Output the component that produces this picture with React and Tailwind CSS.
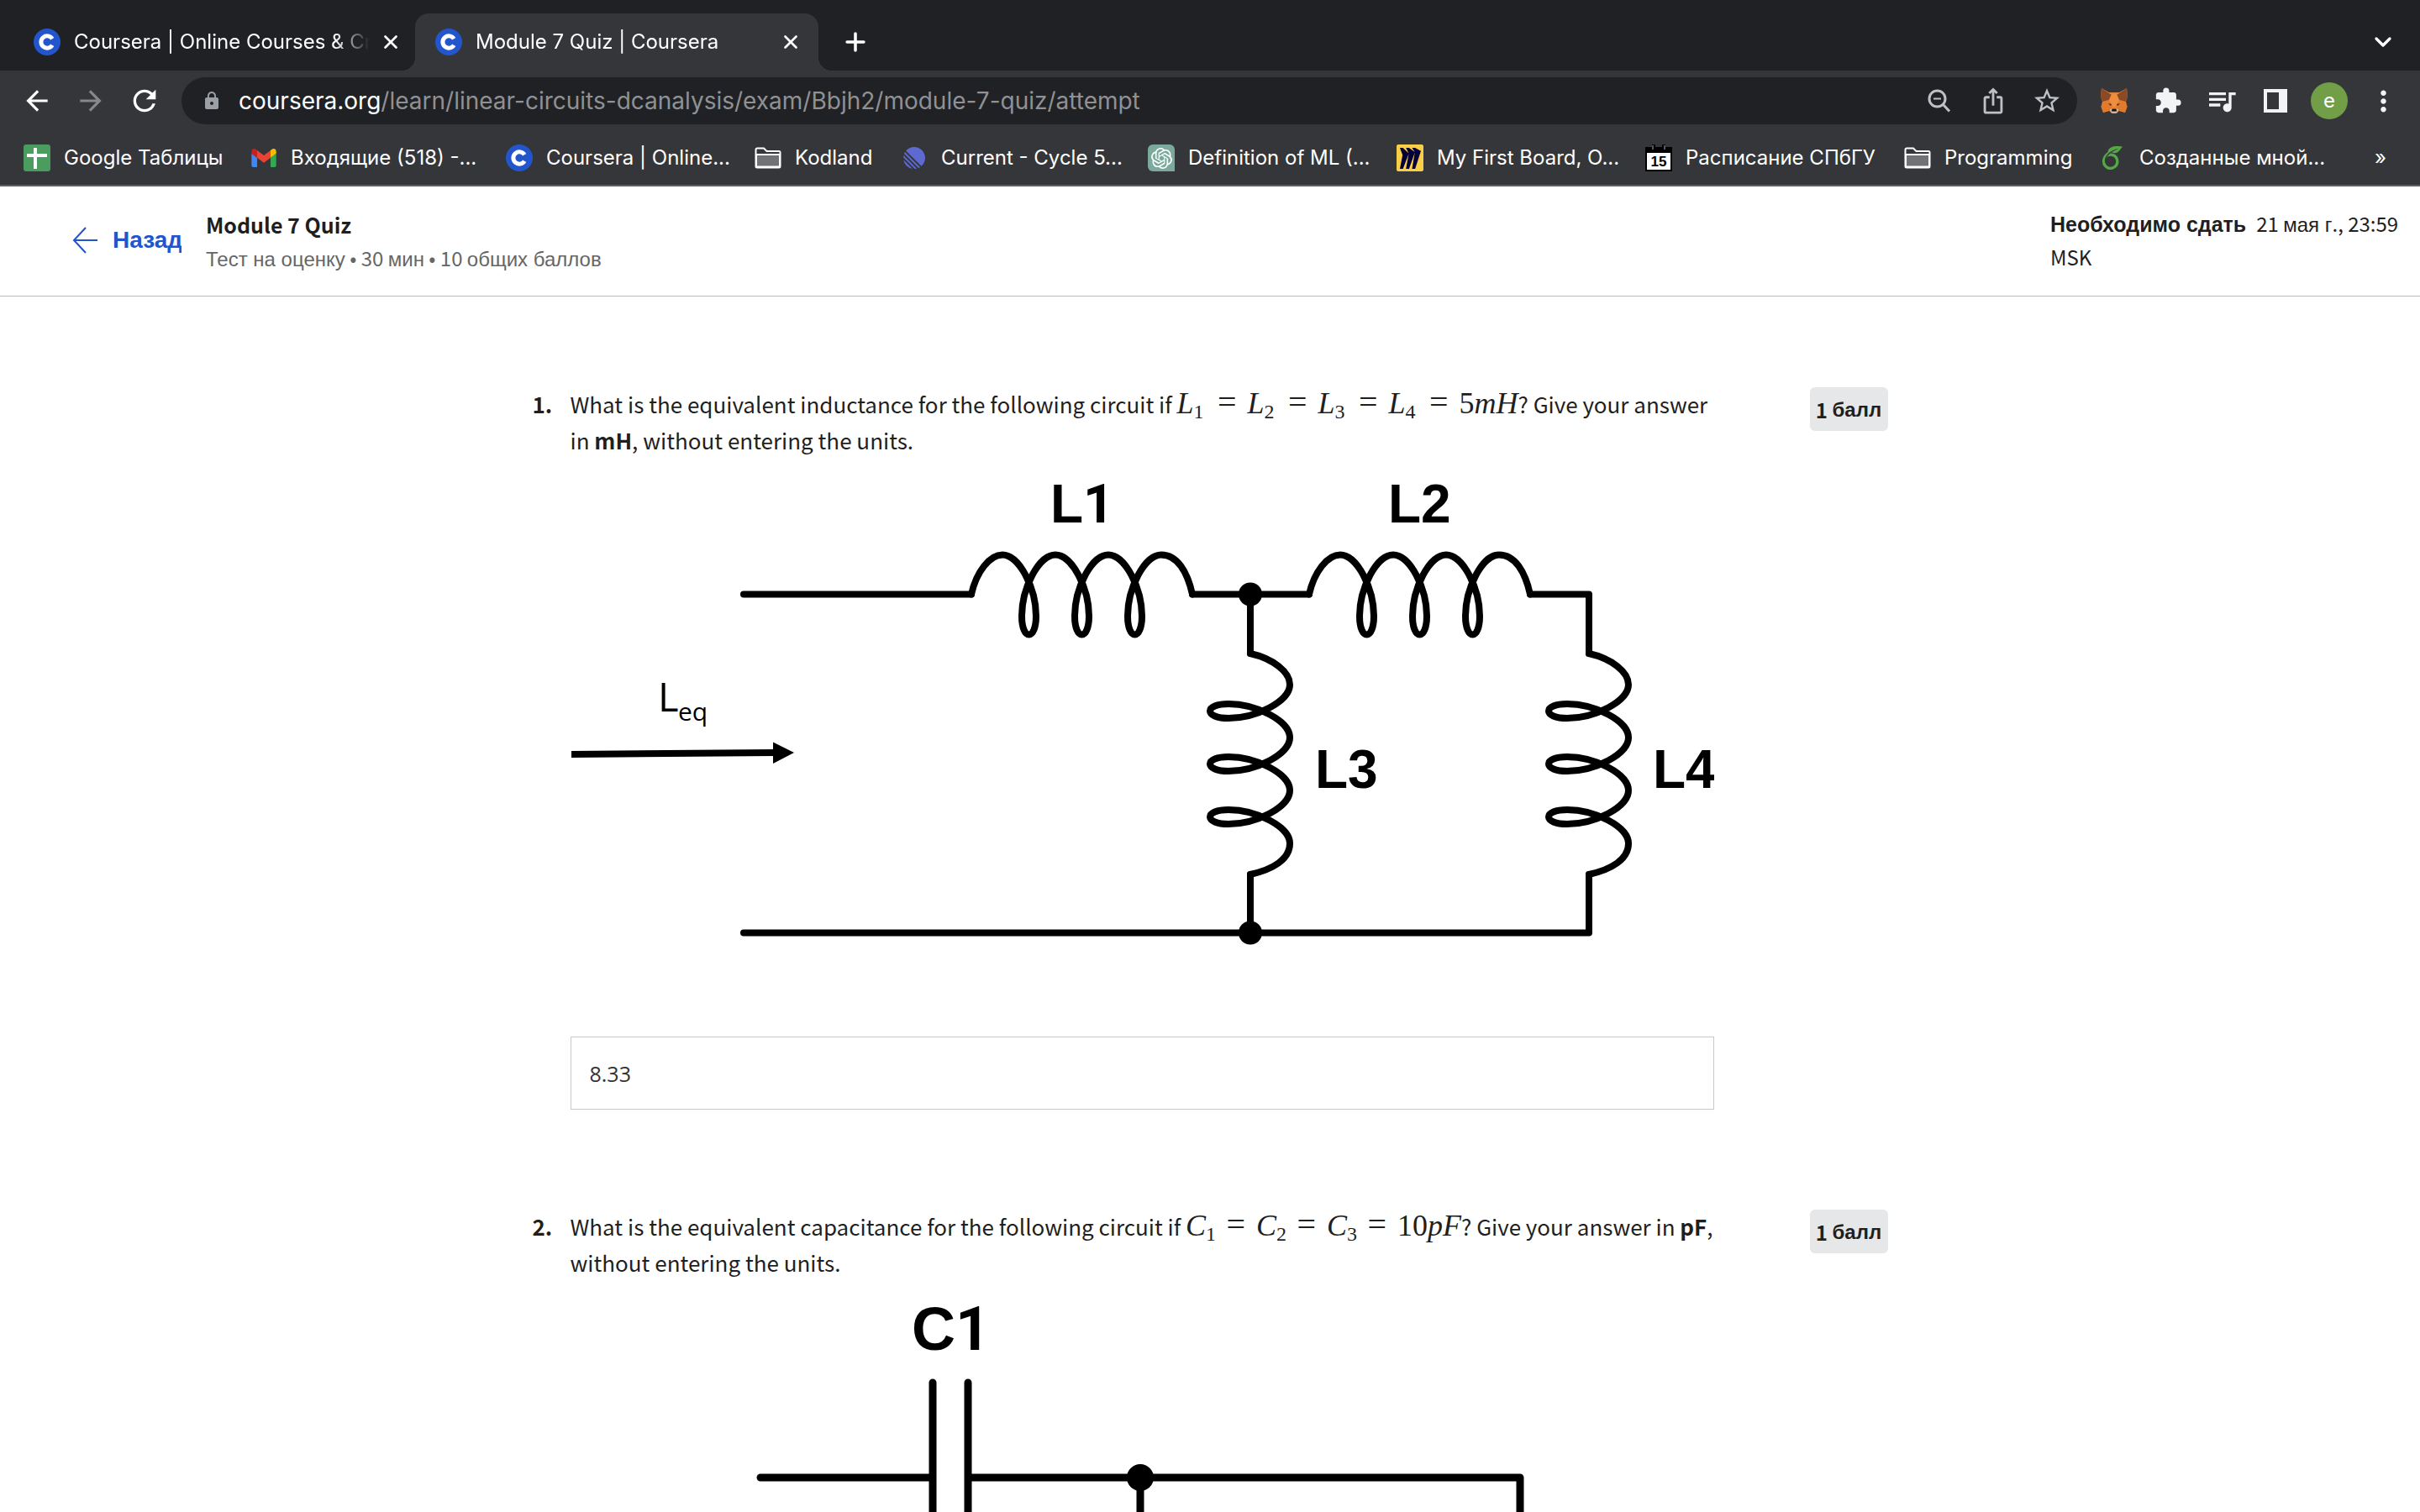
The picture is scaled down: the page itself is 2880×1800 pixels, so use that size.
import React from "react";
import {
  MdArrowBack, MdArrowForward, MdRefresh, MdLock, MdIosShare,
  MdStarOutline, MdExtension, MdQueueMusic, MdMoreVert,
} from "react-icons/md";
import { SiOpenai, SiMiro, SiLinear, SiOverleaf } from "react-icons/si";
import { X, Plus, ChevronDown } from "lucide-react";

const INTER = "font-['Inter','Liberation_Sans',sans-serif]";
const LATIN = "font-['Noto_Sans_CJK_JP','Noto_Sans',sans-serif]";
const CYR = "font-['Liberation_Sans',sans-serif]";

function CourseraIcon() {
  return (
    <svg viewBox="0 0 32 32" className="size-8 shrink-0" aria-hidden="true">
      <circle cx="16" cy="16" r="16" fill="#2356cc" />
      <path d="M22.2 12.2A7.2 7.2 0 1 0 22.2 19.8" fill="none" stroke="#fff" strokeWidth="5" />
    </svg>
  );
}

function SheetsIcon() {
  return (
    <svg viewBox="0 0 32 32" className="size-8 shrink-0" aria-hidden="true">
      <rect width="32" height="32" rx="3" fill="#4a9c5f" />
      <path d="M14 4V29M4 13H28" stroke="#fff" strokeWidth="4" />
    </svg>
  );
}

function GmailIcon() {
  return (
    <svg viewBox="48 31 96 88" className="size-8 shrink-0" aria-hidden="true">
      <path fill="#4285f4" d="M58 108h14V74L52 59v43c0 3.32 2.69 6 6 6" />
      <path fill="#34a853" d="M120 108h14c3.32 0 6-2.69 6-6V59l-20 15" />
      <path fill="#fbbc04" d="M120 48v26l20-15v-8c0-7.42-8.47-11.65-14.4-7.2" />
      <path fill="#ea4335" d="M72 74V48l24 18 24-18v26L96 92" />
      <path fill="#c5221f" d="M52 51v8l20 15V48l-5.6-4.2c-5.94-4.45-14.4-.22-14.4 7.2" />
    </svg>
  );
}

function FolderIcon() {
  return (
    <svg viewBox="0 0 32 32" className="size-8 shrink-0" aria-hidden="true">
      <path d="M1.5 6a1.5 1.5 0 0 1 1.5-1.5H11L14.5 8H29a1.5 1.5 0 0 1 1.5 1.5V26a1.5 1.5 0 0 1-1.5 1.5H3A1.5 1.5 0 0 1 1.5 26Z" fill="#35363a" stroke="#fff" strokeWidth="2" />
      <path d="M2 12H30V26.5H2Z" fill="#717275" stroke="#fff" strokeWidth="2" />
    </svg>
  );
}

function LinearIcon() {
  return <span className="grid size-8 shrink-0 place-items-center"><SiLinear size={26} color="#5e6ad2" /></span>;
}

function GptIcon() {
  return (
    <span className="grid size-8 shrink-0 place-items-center rounded-md rounded-br-none bg-[#7ba99b]">
      <SiOpenai size={25} color="#fff" />
    </span>
  );
}

function MiroIcon() {
  return (
    <span className="grid size-8 shrink-0 place-items-center rounded-xs bg-[#f9cf48]">
      <SiMiro size={25} color="#050038" />
    </span>
  );
}

function CalendarIcon() {
  return (
    <svg viewBox="0 0 32 32" className="size-8 shrink-0" aria-hidden="true">
      <path d="M0 3H8V0H12V3H20V0H24V3H32V32H0Z" fill="#000" />
      <path d="M9 1V6M23 1V6" stroke="#55565a" strokeWidth="2" />
      <rect x="2" y="10" width="28" height="20" fill="#fff" />
      <text x="16" y="26" textAnchor="middle" fontFamily="Liberation Sans" fontWeight="700" fontSize="17">15</text>
    </svg>
  );
}

function OverleafIcon() {
  return <span className="grid size-8 shrink-0 place-items-center"><SiOverleaf size={28} color="#55a847" /></span>;
}

function ZoomOutIcon() {
  return (
    <svg viewBox="0 0 28 28" className="size-7" fill="none" stroke="currentColor" strokeWidth="3" aria-hidden="true">
      <circle cx="11.5" cy="11.5" r="9.5" />
      <path d="M18 18 26 26.5" />
      <path d="M7 11.5H16" strokeWidth="2" />
    </svg>
  );
}

function FoxIcon() {
  return (
    <svg viewBox="0 0 32 30" className="h-[30px] w-8" aria-hidden="true">
      <path d="M1 0 10 5H22L31 0 32 10 30 16 31.5 22 29 29 22 27 18 30H14L10 27 3 29 .5 22 2 16 0 10Z" fill="#e8833a" />
      <path d="M1 0 13 8 10 14 2 16 0 10ZM31 0 19 8 22 14 30 16 32 10Z" fill="#8a4a26" />
      <path d="M10 14 13 7H19L22 14 18 22H14Z" fill="#ee8f3f" />
      <path d="M3 16 10 14 14 22 10 27 3 29 .5 22ZM29 16 22 14 18 22 22 27 29 29 31.5 22Z" fill="#e27a2c" />
      <path d="M9 18 13 19 12 21ZM23 18 19 19 20 21Z" fill="#3a2b25" />
      <path d="M11 25 14 24H18L21 25 20 29 18 30H14L12 29Z" fill="#c9b5a6" />
      <path d="M13.5 24.5H18.5L19 27.5H13Z" fill="#17130f" />
    </svg>
  );
}

const BOOKMARKS = [
  { Icon: SheetsIcon, label: "Google Таблицы", w: "w-[270px]" },
  { Icon: GmailIcon, label: "Входящие (518) -...", w: "w-[304px]" },
  { Icon: CourseraIcon, label: "Coursera | Online...", w: "w-[296px]" },
  { Icon: FolderIcon, label: "Kodland", w: "w-[174px]" },
  { Icon: LinearIcon, label: "Current - Cycle 5...", w: "w-[294px]" },
  { Icon: GptIcon, label: "Definition of ML (...", w: "w-[296px]" },
  { Icon: MiroIcon, label: "My First Board, O...", w: "w-[296px]" },
  { Icon: CalendarIcon, label: "Расписание СПбГУ", w: "w-[308px]" },
  { Icon: FolderIcon, label: "Programming", w: "w-[232px]" },
  { Icon: OverleafIcon, label: "Созданные мной...", w: "w-[296px]" },
];

function Tab({ title, active }) {
  return (
    <div
      role="tab"
      aria-selected={active}
      className={
        active
          ? "relative flex h-[68px] w-[480px] items-center gap-4 rounded-t-2xl bg-[#35363a] pr-5 pl-6"
          : "flex h-[68px] w-[478px] items-center gap-4 pr-4 pl-6"
      }
    >
      {active && (
        <>
          <span className="absolute bottom-0 -left-4 size-4 bg-[radial-gradient(circle_at_0_0,transparent_16px,#35363a_16px)]" />
          <span className="absolute -right-4 bottom-0 size-4 bg-[radial-gradient(circle_at_100%_0,transparent_16px,#35363a_16px)]" />
        </>
      )}
      <CourseraIcon />
      <span className="min-w-0 flex-1 overflow-hidden whitespace-nowrap [mask-image:linear-gradient(to_right,#000_88%,transparent)]">
        {title}
      </span>
      <button aria-label="Close tab" className="-ml-1"><X size={26} strokeWidth={2.5} /></button>
    </div>
  );
}

function ToolButton({ label, children }) {
  return (
    <button aria-label={label} className="grid h-14 w-16 shrink-0 place-items-center">
      {children}
    </button>
  );
}

function BrowserChrome() {
  return (
    <header className={`${INTER} shrink-0 border-b-2 border-[#5f5e63] bg-[#35363a] text-[24px] text-white`}>
      <div className="flex h-[84px] items-end bg-[#202124] pr-3 pl-4">
        <Tab title="Coursera | Online Courses & Credentials" active={false} />
        <Tab title="Module 7 Quiz | Coursera" active />
        <button aria-label="New tab" className="ml-3 grid h-[68px] w-16 place-items-center">
          <Plus size={34} strokeWidth={2.5} />
        </button>
        <button aria-label="Search tabs" className="ml-auto grid h-[68px] w-16 place-items-center">
          <ChevronDown size={32} strokeWidth={2.5} />
        </button>
      </div>
      <div className="flex h-[72px] items-center px-3">
        <ToolButton label="Back"><MdArrowBack size={38} /></ToolButton>
        <ToolButton label="Forward"><MdArrowForward size={38} color="#87888b" /></ToolButton>
        <ToolButton label="Reload"><MdRefresh size={40} /></ToolButton>
        <div className="mx-3 flex h-14 min-w-0 flex-1 items-center rounded-full bg-[#202124] pr-1 text-[#bdc1c6]">
          <button aria-label="Site information" className="grid h-14 w-[68px] place-items-center pl-1">
            <MdLock size={24} color="#9aa0a6" />
          </button>
          <div role="textbox" aria-label="Address" className="min-w-0 flex-1 truncate text-[28px] text-[#8f9195]">
            <span className="text-white">coursera.org</span>/learn/linear-circuits-dcanalysis/exam/Bbjh2/module-7-quiz/attempt
          </div>
          <ToolButton label="Zoom"><ZoomOutIcon /></ToolButton>
          <ToolButton label="Share"><MdIosShare size={34} /></ToolButton>
          <ToolButton label="Bookmark"><MdStarOutline size={36} /></ToolButton>
        </div>
        <ToolButton label="MetaMask"><FoxIcon /></ToolButton>
        <ToolButton label="Extensions"><MdExtension size={34} color="#f1f3f4" /></ToolButton>
        <ToolButton label="Media controls"><MdQueueMusic size={40} color="#f1f3f4" /></ToolButton>
        <ToolButton label="Side panel">
          <svg viewBox="0 0 28 28" className="size-7" aria-hidden="true">
            <path fillRule="evenodd" d="M0 0H28V28H0ZM4 4V24H18V4Z" fill="#f1f3f4" />
          </svg>
        </ToolButton>
        <ToolButton label="Profile">
          <span className="grid size-11 place-items-center rounded-full bg-[#739e48]">e</span>
        </ToolButton>
        <ToolButton label="Menu"><MdMoreVert size={39} color="#f1f3f4" /></ToolButton>
      </div>
      <nav aria-label="Bookmarks" className="flex h-16 items-center pr-10 pl-7">
        {BOOKMARKS.map(({ Icon, label, w }) => (
          <a key={label} href="#" className={`${w} flex shrink-0 items-center gap-4 whitespace-nowrap`}>
            <Icon />
            {label}
          </a>
        ))}
        <button aria-label="More bookmarks" className="ml-auto">»</button>
      </nav>
    </header>
  );
}

function Cyr({ children }) {
  return <span className={CYR}>{children}</span>;
}

function QuizHeader() {
  return (
    <header className="flex h-[131px] shrink-0 items-start border-b border-[#bbbbbb] pt-[25px] pr-4 pl-[86px] text-[#1f1f1f]">
      <a href="#" className={`${CYR} flex w-[130px] items-center gap-[18px] overflow-hidden pt-[18px] text-[28px] leading-[42px] font-bold text-[#2055cc]`}>
        <svg viewBox="0 0 30 32" className="h-8 w-[30px] shrink-0" fill="none" stroke="currentColor" strokeWidth="2" aria-hidden="true">
          <path d="M30 16H2M16 1 2 16 16 31" />
        </svg>
        Назад
      </a>
      <div className="ml-[29px] leading-[40px]">
        <h1 className="text-[25px] font-bold">Module 7 Quiz</h1>
        <p className="text-[24px] text-[#666666]">
          <Cyr>Тест на оценку</Cyr> • 30 <Cyr>мин</Cyr> • 10 <Cyr>общих баллов</Cyr>
        </p>
      </div>
      <p className="ml-auto w-[424px] text-[24px] leading-[38px]">
        <span className={`${CYR} mr-3 text-[25px] font-bold`}>Необходимо сдать</span>
        21 <Cyr>мая г</Cyr>., 23:59 MSK
      </p>
    </header>
  );
}

function Term({ symbol, index }) {
  return (
    <span className="inline-flex w-[84px] items-baseline justify-between pr-[13px]">
      <span>
        <i>{symbol}</i>
        <sub className="text-[24px] leading-[24px]">{index}</sub>
      </span>
      <span className="text-[40px] leading-[36px]">=</span>
    </span>
  );
}

function Formula({ symbol, count, value, unit }) {
  return (
    <span className="font-['Liberation_Serif',serif] text-[36px] leading-[36px] whitespace-nowrap">
      {Array.from({ length: count }, (_, i) => (
        <Term key={i} symbol={symbol} index={i + 1} />
      ))}
      {value}
      <i>{unit}</i>
    </span>
  );
}

const COIL =
  "M0 0C6-27 22-47 37-47" +
  [0, 63, 126]
    .map((o) => {
      const p = (x, y) => `${x + o} ${y}`;
      return `C${p(57, -47)} ${p(77, -7)} ${p(77, 26)}C${p(77, 40)} ${p(73, 48)} ${p(68.5, 48)}C${p(64, 48)} ${p(60, 40)} ${p(60, 26)}C${p(60, -7)} ${p(80, -47)} ${p(100, -47)}`;
    })
    .join("") +
  "C245-47 257-27 263 0";

function InductorCircuit() {
  return (
    <svg viewBox="679 545 1361 655" className="block w-full" role="img" aria-label="Inductor circuit">
      <g fill="none" stroke="#000" strokeWidth="8" strokeLinecap="round" strokeLinejoin="round">
        <path d="M885 707.5H1156M1419 707.5H1558M1821 707.5H1891V778M1891 1041V1110.5H885M1488 707V778M1488 1041V1110" />
        <path transform="translate(1156 707.5)" d={COIL} />
        <path transform="translate(1558 707.5)" d={COIL} />
        <path transform="translate(1488 778) rotate(90)" d={COIL} />
        <path transform="translate(1891 778) rotate(90)" d={COIL} />
      </g>
      <circle cx="1488" cy="707.5" r="14" />
      <circle cx="1488" cy="1110.5" r="14" />
      <path d="M680 898 922 896" stroke="#000" strokeWidth="8" />
      <path d="M920 883.5 945 896 920 909Z" />
      <g fontFamily="Liberation Sans" fontWeight="700" fontSize="64">
        <text x="1250" y="622">L<tspan fontFamily="Roboto">1</tspan></text>
        <text x="1652" y="622">L2</text>
        <text x="1565" y="938">L3</text>
        <text x="1967" y="938">L4</text>
      </g>
      <g fontFamily="Open Sans">
        <text x="783" y="847" fontSize="47">L</text>
        <text x="807" y="858" fontSize="30">eq</text>
      </g>
    </svg>
  );
}

function CapacitorCircuit() {
  return (
    <svg viewBox="679 1525 1361 654" className="block w-full" role="img" aria-label="Capacitor circuit">
      <g fill="none" stroke="#000" strokeWidth="9" strokeLinecap="round" strokeLinejoin="round">
        <path d="M905 1760H1110M1110 1647V1873M1152 1647V1873M1152 1760H1809V2100M1357 1760V2100" />
      </g>
      <circle cx="1357" cy="1760" r="16" />
      <text x="1085" y="1608" fontFamily="Liberation Sans" fontWeight="700" fontSize="72">
        C<tspan fontFamily="Roboto">1</tspan>
      </text>
    </svg>
  );
}

function Question({ number, prompt, children, answer }) {
  const id = `answer-${number}`;
  return (
    <li className="flex items-start">
      <span className="w-[45px] shrink-0 font-bold">{number}.</span>
      <div className="min-w-0 flex-1">
        <label htmlFor={id} className="block">{prompt}</label>
        {children}
        <input
          id={id}
          defaultValue={answer}
          className="mt-[34px] h-[87px] w-full border border-[#c7c7cc] px-[22px] font-['Open_Sans',sans-serif] text-[25px] text-[#333333] outline-none"
        />
      </div>
      <span className="mt-0.5 ml-[114px] flex h-[52px] w-[93px] shrink-0 items-center justify-center rounded-md bg-[#e5e7e8] text-[24px] font-bold whitespace-pre">
        1 <Cyr>балл</Cyr>
      </span>
    </li>
  );
}

export default function App() {
  return (
    <div className="flex h-screen flex-col overflow-hidden bg-white">
      <BrowserChrome />
      <div className={`${LATIN} flex min-h-0 flex-1 flex-col`}>
        <QuizHeader />
        <main className="min-h-0 flex-1 overflow-y-auto px-8 pt-[106px] [scrollbar-width:none]">
          <ol className="mx-auto flex max-w-[1613px] flex-col gap-[117px] text-[26px] leading-[43px] text-[#1f1f1f]">
            <Question
              number={1}
              answer="8.33"
              prompt={
                <>
                  What is the equivalent inductance for the following circuit if{" "}
                  <Formula symbol="L" count={4} value="5" unit="mH" />? Give your answer in <b>mH</b>, without entering the units.
                </>
              }
            >
              <InductorCircuit />
            </Question>
            <Question
              number={2}
              answer=""
              prompt={
                <>
                  What is the equivalent capacitance for the following circuit if{" "}
                  <Formula symbol="C" count={3} value="10" unit="pF" />? Give your answer in <b>pF</b>, without entering the units.
                </>
              }
            >
              <CapacitorCircuit />
            </Question>
          </ol>
        </main>
      </div>
    </div>
  );
}
